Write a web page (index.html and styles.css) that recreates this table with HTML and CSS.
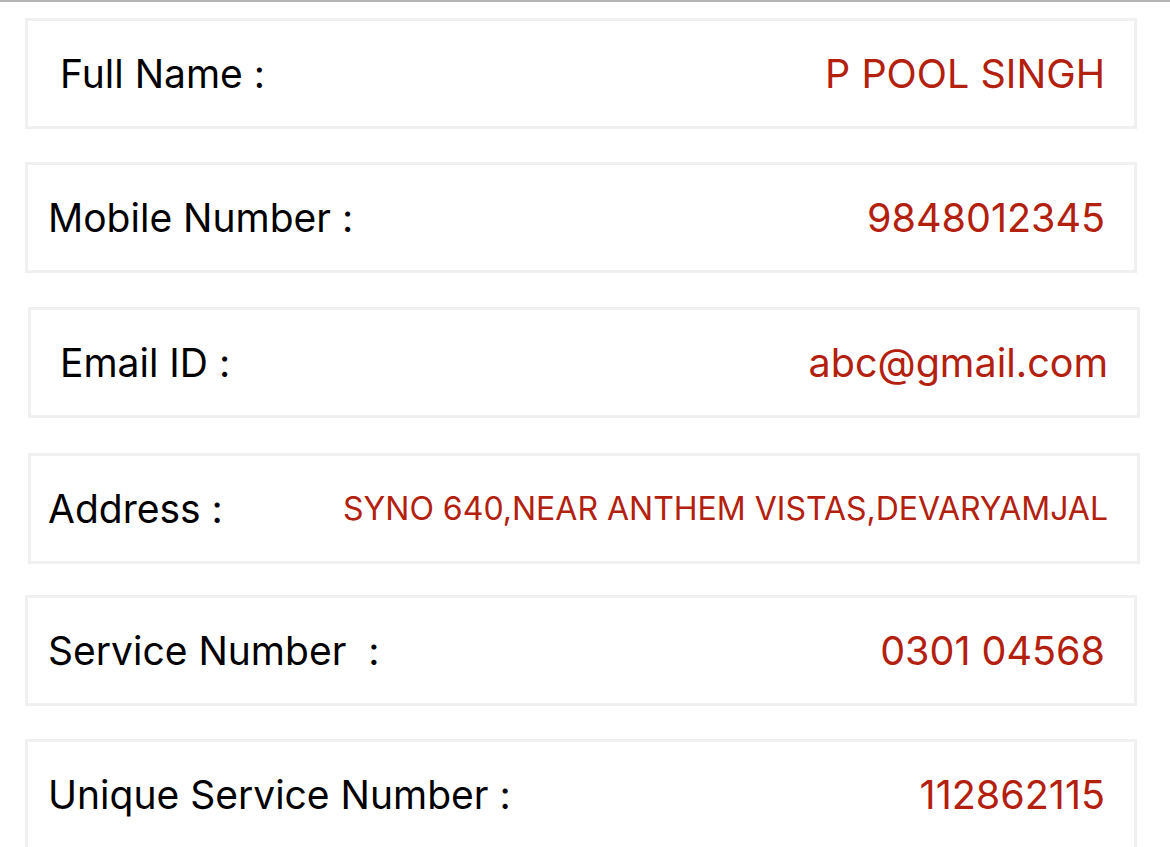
FILE: index.html
```html
<!DOCTYPE html>
<html lang="en">
<head>
    <meta charset="UTF-8">
    <title>Profile Details</title>
    <link rel="stylesheet" href="styles.css">
</head>
<body>
    <div class="details">
        <!-- each row: label on the left, value on the right -->
        <div class="row row-wide">
            <span class="label">Full Name :</span>
            <span class="value">P POOL SINGH</span>
        </div>
        <div class="row">
            <span class="label">Mobile Number :</span>
            <span class="value">9848012345</span>
        </div>
        <div class="row row-shift row-wide">
            <span class="label">Email ID :</span>
            <span class="value">abc@gmail.com</span>
        </div>
        <div class="row row-shift row-low">
            <span class="label">Address :</span>
            <span class="value value-small">SYNO 640,NEAR ANTHEM VISTAS,DEVARYAMJAL</span>
        </div>
        <div class="row">
            <span class="label">Service Number &nbsp;:</span>
            <span class="value">0301 04568</span>
        </div>
        <div class="row">
            <span class="label">Unique Service Number :</span>
            <span class="value">112862115</span>
        </div>
    </div>
</body>
</html>
```

FILE: styles.css
```css
body {
    margin: 0;
    background: #fff;
    border-top: 2px solid #b4b4b4;
    font-family: Inter, "Liberation Sans", sans-serif;
    font-feature-settings: "calt" 0;
    overflow: hidden;
}

.details {
    display: flex;
    flex-direction: column;
    gap: 33px;
    padding: 16px 0 0 25px;
}

.row {
    display: flex;
    justify-content: space-between;
    align-items: center;
    box-sizing: border-box;
    width: 1112px;
    height: 111px;
    padding: 0 29px 0 20px;
    border: 3px solid #f0f0f0;
    background: #fff;
}

.row-wide {
    padding-left: 32px;
}

.row-shift {
    margin-left: 3px;
    padding-left: 17px;
}

.row-shift.row-wide {
    padding-left: 29px;
    margin-top: 1px;
}

.row-low {
    margin-top: 2px;
    margin-bottom: -2px;
}

.label {
    font-size: 39px;
    color: #000;
    white-space: pre;
}

.value {
    font-size: 39.5px;
    color: #b3200d;
}

.value-small {
    font-size: 32px;
}
```
